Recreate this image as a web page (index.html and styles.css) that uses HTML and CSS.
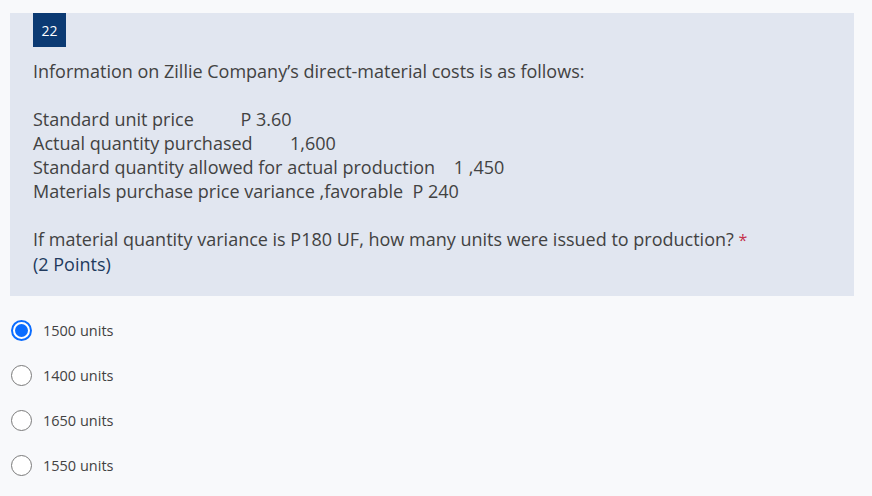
FILE: index.html
```html
<!DOCTYPE html>
<html>
<head>
<meta charset="utf-8">
<link rel="stylesheet" href="styles.css">
</head>
<body>
<div class="card">
  <div class="badge">22</div>
  <div class="question">
    <p class="line">Information on Zillie Company’s direct-material costs is as follows:</p>
    <p class="line blank">&nbsp;</p>
    <p class="line pre">Standard unit price          P 3.60</p>
    <p class="line pre">Actual quantity purchased        1,600</p>
    <p class="line pre">Standard quantity allowed for actual production    1 ,450</p>
    <p class="line pre">Materials purchase price variance ,favorable  P 240</p>
    <p class="line blank">&nbsp;</p>
    <p class="line">If material quantity variance is P180 UF, how many units were issued to production? <span class="req">*</span></p>
    <p class="line points">(2 Points)</p>
  </div>
</div>
<div class="options">
  <label class="option"><span class="radio checked"></span><span class="opt-text">1500 units</span></label>
  <label class="option"><span class="radio"></span><span class="opt-text">1400 units</span></label>
  <label class="option"><span class="radio"></span><span class="opt-text">1650 units</span></label>
  <label class="option"><span class="radio"></span><span class="opt-text">1550 units</span></label>
</div>
</body>
</html>
```

FILE: styles.css
```css
* { box-sizing: border-box; }
html, body {
  margin: 0;
  padding: 0;
  background: #f8f9fb;
  font-family: "Open Sans", "Noto Sans", "Liberation Sans", sans-serif;
  color: #424242;
}
body { width: 872px; height: 496px; overflow: hidden; }
.card {
  margin: 13px 0 0 10px;
  width: 844px;
  background: #e1e6f0;
  padding: 0 23px 20px 23px;
}
.badge {
  width: 33px;
  height: 34px;
  background: #0b3a73;
  color: #fff;
  font-size: 14px;
  display: flex;
  align-items: center;
  justify-content: center;
}
.question {
  margin-top: 12px;
  font-size: 18px;
}
.line {
  margin: 0;
  line-height: 24px;
}
.pre { white-space: pre; }
.req { color: #c4314b; font-size: 16px; }
.points { color: #223a5e; }
.options {
  display: flex;
  flex-direction: column;
  padding: 12px 0 0 11px;
}
.option {
  display: flex;
  align-items: center;
  height: 45px;
}
.radio {
  width: 21px;
  height: 21px;
  border-radius: 50%;
  border: 1px solid #7a7a7a;
  background: #fff;
  position: relative;
  flex: none;
}
.radio.checked {
  border: 2px solid #0a6cff;
}
.radio.checked::after {
  content: "";
  position: absolute;
  left: 2px;
  top: 2px;
  width: 13px;
  height: 13px;
  border-radius: 50%;
  background: #0a6cff;
}
.opt-text {
  margin-left: 11px;
  font-size: 14.5px;
  color: #424242;
}
```
